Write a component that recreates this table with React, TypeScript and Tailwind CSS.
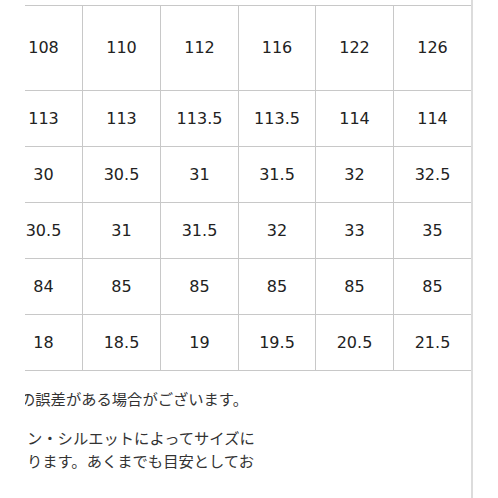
import { FC } from "react";

const rows: string[][] = [
  ["108", "110", "112", "116", "122", "126"],
  ["113", "113", "113.5", "113.5", "114", "114"],
  ["30", "30.5", "31", "31.5", "32", "32.5"],
  ["30.5", "31", "31.5", "32", "33", "35"],
  ["84", "85", "85", "85", "85", "85"],
  ["18", "18.5", "19", "19.5", "20.5", "21.5"],
];

const App: FC = () => {
  return (
    <div className="flex h-[498px] w-[498px] overflow-hidden bg-white">
      <div className="w-[471px] shrink-0">
        <div className="ml-[25px] w-[446px] overflow-hidden pt-[5px]">
          <div
            className="-ml-[20px] grid w-[466px] grid-cols-[78px_78px_78px_77px_78px_77px] border-t border-[#c8c8c8] text-[16px] text-[#222222]"
            style={{ fontFamily: '"DejaVu Sans", sans-serif' }}
          >
            {rows.map((row, i) =>
              row.map((cell, j) => (
                <div
                  key={`${i}-${j}`}
                  className={`flex items-center justify-center border-b border-[#c8c8c8] ${
                    j < 5 ? "border-r" : ""
                  } ${i === 0 ? "h-[85px]" : "h-[56px]"}`}
                >
                  {cell}
                </div>
              ))
            )}
          </div>

          <div
            className="mt-[15px] text-[15.3px] leading-[24px] text-[#333333]"
            style={{ fontFamily: '"Noto Sans CJK JP", sans-serif' }}
          >
            <p className="-ml-[5px] whitespace-nowrap">の誤差がある場合がございます。</p>
            <p className="mt-[16px] whitespace-nowrap pl-[2px] leading-[23px]">
              ン・シルエットによってサイズに
              <br />
              ります。あくまでも目安としてお
            </p>
          </div>
        </div>
      </div>
      <div className="w-[2px] shrink-0 bg-[#dcdcdc]" />
      <div className="flex-1" />
    </div>
  );
};

export default App;
